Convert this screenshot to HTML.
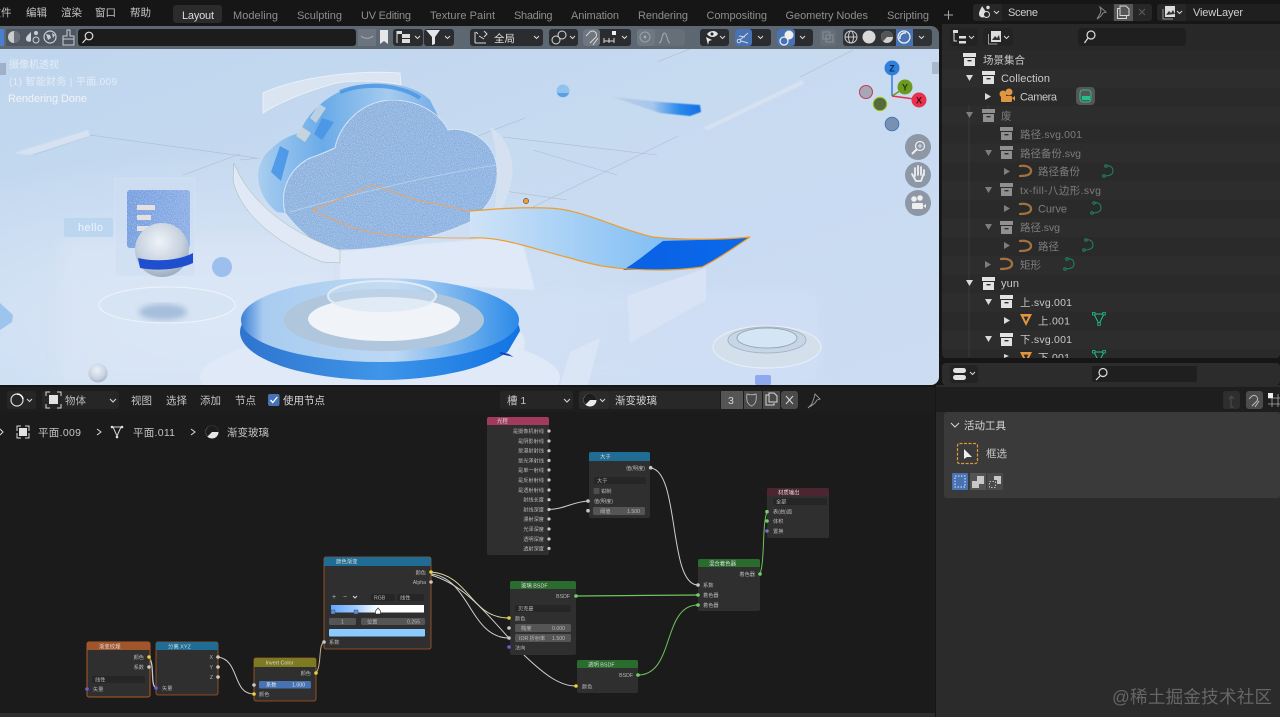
<!DOCTYPE html>
<html><head><meta charset="utf-8"><title>Blender</title>
<style>
html,body{margin:0;padding:0;background:#161616;width:1280px;height:717px;overflow:hidden}
svg{display:block;filter:blur(.35px)}
text{font-family:"Liberation Sans","Noto Sans CJK SC",sans-serif;fill:#c4c4c4;font-size:10.5px}
.tab{fill:#8e8e8e;font-size:11px}
.ol{fill:#c8c8c8;font-size:10.5px}
.dim{fill:#7d7d7d;font-size:10.5px}
.l{font-size:11px}
.n{font-size:5.2px;fill:#b8b8b8}
.nh{font-size:5.4px;fill:#d8d8d8}
.r{text-anchor:end}
.w{fill:none;stroke:#cfcfcf;stroke-width:1}
.g{fill:none;stroke:#6fc45c;stroke-width:1}
.ln{stroke:#aebccd;stroke-width:.6;fill:none}
.ic{fill:none;stroke:#d8d8d8;stroke-width:1}
</style></head><body>
<svg width="1280" height="717" viewBox="0 0 1280 717" xmlns="http://www.w3.org/2000/svg">
<defs>
<clipPath id="vclip"><path d="M0 49H939V377a8 8 0 0 1-8 8H0z"/></clipPath>
<linearGradient id="vp" x1="0" y1="0" x2="1" y2="1"><stop offset="0" stop-color="#bfd6ee"/><stop offset=".55" stop-color="#c8dbf1"/><stop offset="1" stop-color="#ccdcf3"/></linearGradient>
<radialGradient id="lite" cx=".25" cy=".8" r=".5"><stop offset="0" stop-color="#dde8f7"/><stop offset="1" stop-color="#dde8f7" stop-opacity="0"/></radialGradient>
<linearGradient id="cloudside" x1="0" y1="0" x2="1" y2="0"><stop offset="0" stop-color="#a9cdf0"/><stop offset=".35" stop-color="#6aabe8"/><stop offset=".7" stop-color="#a5cbef"/><stop offset="1" stop-color="#6ea8e6"/></linearGradient>
<linearGradient id="face" x1="0" y1="0" x2="1" y2="1"><stop offset="0" stop-color="#89b0dc"/><stop offset="1" stop-color="#88b0e2"/></linearGradient>
<linearGradient id="rib" x1="0" y1="0" x2="1" y2="0"><stop offset="0" stop-color="#d0e3f7"/><stop offset=".45" stop-color="#9ccbf5"/><stop offset="1" stop-color="#5cb0f2"/></linearGradient>
<linearGradient id="rib2" x1="0" y1="0" x2="1" y2="0"><stop offset="0" stop-color="#0a60e4"/><stop offset="1" stop-color="#0a6aea"/></linearGradient>
<linearGradient id="bar" x1="0" y1="0" x2="1" y2="0"><stop offset="0" stop-color="#bccee4"/><stop offset=".45" stop-color="#a6c6ec"/><stop offset=".75" stop-color="#2a8aeb"/><stop offset="1" stop-color="#1470e4"/></linearGradient>
<linearGradient id="disc" x1="0" y1="0" x2="1" y2="0"><stop offset="0" stop-color="#3b7fd6"/><stop offset=".08" stop-color="#a8ccf0"/><stop offset=".55" stop-color="#bdd8f4"/><stop offset=".85" stop-color="#5ea6ec"/><stop offset="1" stop-color="#2b8ae8"/></linearGradient>
<linearGradient id="discb" x1="0" y1="0" x2="1" y2="0"><stop offset="0" stop-color="#2f74cf"/><stop offset=".5" stop-color="#3f95e8"/><stop offset="1" stop-color="#1174e4"/></linearGradient>
<radialGradient id="ball" cx=".45" cy=".35" r=".7"><stop offset="0" stop-color="#eef3f9"/><stop offset=".6" stop-color="#c7d2de"/><stop offset="1" stop-color="#94a6ba"/></radialGradient>
<linearGradient id="ramp" x1="0" y1="0" x2="1" y2="0"><stop offset="0" stop-color="#63a6ff"/><stop offset=".25" stop-color="#9ac8ff"/><stop offset=".5" stop-color="#fff"/><stop offset="1" stop-color="#fff"/></linearGradient>
<linearGradient id="pan" x1="0" y1="0" x2="1" y2="0"><stop offset="0" stop-color="#6d9ade"/><stop offset="1" stop-color="#86abe6"/></linearGradient>
<filter id="noise" x="0" y="0" width="100%" height="100%"><feTurbulence type="fractalNoise" baseFrequency="1.1" numOctaves="2" seed="3"/><feColorMatrix values="0 0 0 0 .8  0 0 0 0 .88  0 0 0 0 .97  0 0 0 1.2 -.52"/><feComposite in2="SourceGraphic" operator="in"/><feMerge><feMergeNode in="SourceGraphic"/><feMergeNode/></feMerge></filter>
<filter id="b1"><feGaussianBlur stdDeviation=".6"/></filter>
<filter id="b3"><feGaussianBlur stdDeviation="3"/></filter>
<filter id="b8"><feGaussianBlur stdDeviation="8"/></filter>
<symbol id="coll" viewBox="0 0 14 14" overflow="visible"><rect x="0" y="0" width="13" height="4" fill="#e2e2e2"/><path d="M1 5h11v8H1zM4.5 7v1.4h4V7z" fill="#e2e2e2" fill-rule="evenodd"/></symbol>
<symbol id="curve" viewBox="0 0 14 12" overflow="visible"><path d="M1 1C7 0 12 2 12 6S7 11 1 11" fill="none" stroke="#c98a46" stroke-width="2.3" stroke-linecap="round"/></symbol>
<symbol id="gc" viewBox="0 0 14 14" overflow="visible"><path d="M5 2C9 1 12 3 12 7S8 12 3 12" fill="none" stroke="#1ca47c" stroke-width="1"/><circle cx="5" cy="2" r="1.3" fill="#2a2a2a" stroke="#1ca47c"/><circle cx="3" cy="12" r="1.3" fill="#2a2a2a" stroke="#1ca47c"/></symbol>
<symbol id="gm" viewBox="0 0 14 14" overflow="visible"><path d="M2 2h10L7 12z" fill="none" stroke="#1fc28e" stroke-width="1"/><rect x=".5" y=".5" width="2.5" height="2.5" fill="#2a2a2a" stroke="#1fc28e" stroke-width=".8"/><rect x="10.8" y=".5" width="2.5" height="2.5" fill="#2a2a2a" stroke="#1fc28e" stroke-width=".8"/><rect x="5.8" y="10.8" width="2.5" height="2.5" fill="#2a2a2a" stroke="#1fc28e" stroke-width=".8"/></symbol>
<symbol id="mesh" viewBox="0 0 14 14" overflow="visible"><path d="M1 1h12L7 13z M4.6 3.6h4.8L7 8.6z" fill="#df963f" fill-rule="evenodd"/></symbol>
</defs>

<rect width="1280" height="717" fill="#161616"/>

<!-- top bar -->
<rect x="173" y="5" width="49" height="18" rx="3" fill="#2b2b2b"/>
<text x="-9.5" y="16">文件</text><text x="26" y="16">编辑</text><text x="61" y="16">渲染</text><text x="95" y="16">窗口</text><text x="130" y="16">帮助</text>
<text class="l" x="182" y="19" textLength="32" style="fill:#dcdcdc">Layout</text>
<text class="tab" x="233" y="19" textLength="45">Modeling</text>
<text class="tab" x="297" y="19" textLength="45">Sculpting</text>
<text class="tab" x="361" y="19" textLength="50">UV Editing</text>
<text class="tab" x="430" y="19" textLength="65">Texture Paint</text>
<text class="tab" x="514" y="19" textLength="38.5">Shading</text>
<text class="tab" x="571" y="19" textLength="48">Animation</text>
<text class="tab" x="638" y="19" textLength="50">Rendering</text>
<text class="tab" x="706.5" y="19" textLength="60.5">Compositing</text>
<text class="tab" x="785.5" y="19" textLength="82.5">Geometry Nodes</text>
<text class="tab" x="887" y="19" textLength="42">Scripting</text>
<path d="M944 15h9M948.500 10.500v9" stroke="#a8a8a8" fill="none"/>

<!-- scene selector -->
<rect x="973" y="4" width="179" height="17" rx="3" fill="#272727"/>
<rect x="1002" y="4" width="111" height="17" fill="#1f1f1f"/>
<path d="M982 6c2 3 4 5 4 8a3.500 3.500 0 0 1-7 0c0-3 2-5 3-8z" fill="#dedede"/><circle cx="986.500" cy="14.500" r="3" fill="#272727" stroke="#dedede"/><circle cx="988" cy="7.500" r="1.700" fill="#dedede"/>
<path d="M994 11l2.500 2.500L999 11" class="ic"/>
<text class="l" x="1008" y="16" style="fill:#cfcfcf" textLength="30">Scene</text>
<path d="M1100 7l6 5-3 1-2 3-4 3 3-5 1-3z" class="ic" stroke-width=".8" style="stroke:#8a8a8a"/>
<rect x="1114" y="4" width="19" height="17" fill="#565656"/>
<path d="M1120 8.500h-2.500v10h9v-3M1120 6h6l3 3v6.500h-9z" class="ic" />
<path d="M1139 9l6 6M1145 9l-6 6" stroke="#5e5e5e" fill="none"/>
<rect x="1157" y="4" width="123" height="17" rx="3" fill="#272727"/>
<rect x="1186" y="4" width="94" height="17" fill="#1f1f1f"/>
<rect x="1165" y="6" width="10" height="11" fill="#dcdcdc"/><path d="M1166 15l3-4 2 2 2-3 2 4z" fill="#333"/><path d="M1163 9v10h10" class="ic" style="stroke:#999"/>
<path d="M1177 11l2.500 2.500L1182 11" class="ic"/>
<text class="l" x="1193" y="16" style="fill:#cfcfcf" textLength="50">ViewLayer</text>

<!-- viewport -->
<g clip-path="url(#vclip)">
<path d="M0 49H939V385H0z" fill="url(#vp)"/>
<path d="M0 49H939V385H0z" fill="url(#lite)"/>
<rect x="60" y="240" width="270" height="145" fill="#dbe6f6" filter="url(#b8)" opacity=".6"/>
<rect x="520" y="290" width="300" height="95" fill="#d3e0f5" filter="url(#b8)" opacity=".6"/>
<!-- floor lines -->
<path class="ln" d="M90 135L257 158M33 155L93 135M183 175L240 154M473 138L525 118M503 137L657 155M533 207L678 136M497 190L567 200M533 150L617 175M800 77L853 50M657 62L690 49M240 160L260 158"/>
<path d="M14 153L88 130L90 136L30 155z" fill="#d6e2f2" filter="url(#b1)"/>
<path d="M703 128L802 80L804 84L708 130z" fill="#d6e2f2" filter="url(#b1)"/>

<!-- top arc -->
<path d="M263 93C300 76 360 70 400 73L401 85C380 80 345 80 333 84C305 92 280 102 263 113z" fill="#dbe5f2" stroke="#eef3f9" stroke-width=".8"/>
<!-- cloud side -->
<path d="M277 212C255 195 252 165 270 150C280 140 290 135 300 133C305 115 330 90 360 85C385 80 415 85 430 100L445 130L300 215z" fill="url(#cloudside)"/>
<path d="M319 104l-9 14 6 5 10-15z" fill="#c4d4e2" opacity=".9"/>
<path d="M302 127l-6 9 9 6 6-9z" fill="#c6d4de"/>
<path d="M271 172l9-26 9 5-8 30z" fill="#3a8de4" opacity=".75"/>
<path d="M322 118l-8 16 8 6 12-18z" fill="#3f8fe6" opacity=".7"/>
<path d="M340 92C360 84 395 82 420 98" fill="none" stroke="#3c8fe4" stroke-width="4" opacity=".7"/>
<!-- cloud face -->
<path d="M285 213C279 190 290 168 310 158C322 154 330 150 335 148C340 122 365 100 392 100C420 100 441 115 448 130C470 126 495 142 497 168C499 190 488 208 470 222C440 236 390 250 342 250C320 250 300 232 285 213z" fill="url(#face)" stroke="#d3e2f3" stroke-width="1" filter="url(#noise)"/>
<path d="M290 212C350 195 430 175 497 165" fill="none" stroke="#c6daf0" stroke-width=".8" opacity=".8"/>
<!-- ground under cloud -->
<path d="M340 251L470 240L520 232L535 290L340 280z" fill="#dfe9f7" filter="url(#b1)"/>
<!-- lower left arc -->
<path d="M234 163C250 205 295 235 340 250L340 263L322 262C280 245 240 215 233 180z" fill="#e0e9f5" stroke="#a8b4a8" stroke-width=".5"/>
<!-- right arc -->
<path d="M490 127C505 135 515 155 512 178C508 200 500 215 492 226C498 195 500 155 490 127z" fill="#d6e2f0" opacity=".95"/>

<!-- ribbon -->
<path d="M470 237C500 236 530 248 570 258C590 264 610 270 660 270C680 270 695 268 702 267C720 258 735 247 750 237C720 240 680 240 653 237C620 230 580 208 547 208C520 207 495 209 470 211z" fill="url(#rib)"/>
<path d="M623 270C640 260 650 250 663 241C690 240 720 240 750 237C735 247 720 258 702 267C680 270 650 270 623 270z" fill="url(#rib2)"/>
<path d="M312 210L373 185L417 200L470 211" fill="none" stroke="#e9a56a" stroke-width="1"/>
<path d="M312 210L350 227C375 235 400 238 470 238" fill="none" stroke="#e9a56a" stroke-width="1"/>
<path d="M470 211C495 209 520 207 547 208C580 208 620 230 653 237C680 240 720 240 750 237C735 247 720 258 702 267C695 268 680 270 660 270C610 270 590 264 570 258C530 248 500 236 470 238" fill="none" stroke="#ee9d2e" stroke-width="1.2"/>
<circle cx="526" cy="201" r="2.700" fill="#f29a35" stroke="#333" stroke-width=".5"/>
<!-- white box -->
<path d="M627 296L706 268V300L630 343z" fill="#d8e3f6"/>
<!-- bar and droplet -->
<path d="M613 97L660 102L700 105L701 112L690 116L660 113z" fill="url(#bar)" filter="url(#b1)"/>
<circle cx="563" cy="91" r="6.500" fill="#8fc2ee"/><path d="M557 93a6.500 6.500 0 0 0 12 0z" fill="#5aa0e0"/>

<!-- hello card -->
<rect x="115" y="178" width="80" height="98" fill="#cfdef2" stroke="#dde7f5" stroke-width=".7" opacity=".6"/>
<rect x="64" y="218" width="49" height="19" rx="2" fill="#bcd6f0"/>
<text x="78" y="231" style="fill:#eef5fc;font-size:11px" textLength="25">hello</text>
<rect x="127" y="190" width="63" height="58" rx="3" fill="url(#pan)" filter="url(#noise)"/>
<rect x="137" y="205" width="18" height="5" fill="#e3dfe2"/><rect x="137" y="215" width="14" height="5" fill="#e3dfe2"/><rect x="137" y="226" width="12" height="5" fill="#e3dfe2"/>
<ellipse cx="167" cy="305" rx="68" ry="18" fill="#d6e4f3" stroke="#eef3f9"/>
<ellipse cx="163" cy="312" rx="24" ry="8" fill="#a5bedc" filter="url(#b3)"/>
<circle cx="162" cy="250" r="27" fill="url(#ball)"/>
<path d="M138 258C155 262 178 261 193 253V263C178 270 155 271 140 268z" fill="#1f4ecf"/>
<circle cx="222" cy="267" r="10" fill="#9cbfee"/>
<path d="M0 303L13 315L12 322L0 330z" fill="#9cc4ec"/>
<circle cx="98" cy="373" r="9.500" fill="url(#ball)" opacity=".85"/>

<!-- platform -->
<ellipse cx="380" cy="378" rx="180" ry="46" fill="#e0e9f7"/>
<ellipse cx="380" cy="332" rx="140" ry="48" fill="url(#discb)"/>
<ellipse cx="380" cy="320" rx="139" ry="42" fill="url(#disc)"/>
<ellipse cx="384" cy="320" rx="100" ry="31" fill="#afc6dc"/>
<ellipse cx="384" cy="319" rx="76" ry="22" fill="#f0f4f9"/>
<ellipse cx="382" cy="296" rx="54" ry="15" fill="#cfe0f1" fill-opacity=".45" stroke="#e2eaf4" stroke-width="2"/>
<path d="M500 353l14 3 5-3" stroke="#1545b8" stroke-width="2" fill="none"/>
<path d="M520 331c8 8 5 22-3 28l-10-6z" fill="#e0e9f6"/>
<path d="M560 385l10-33 30-14 -12 47z" fill="#dce6f5" opacity=".8"/>
<!-- ring -->
<ellipse cx="767" cy="347" rx="54" ry="21" fill="#d4dfec" stroke="#e8eff7"/>
<ellipse cx="767" cy="340" rx="39" ry="13" fill="#c6d6e6" stroke="#a7b5c3"/>
<ellipse cx="767" cy="338" rx="30" ry="10" fill="#d4e5f4" stroke="#8e9cab" stroke-width=".8"/>
<rect x="755" y="375" width="16" height="10" rx="2" fill="#8ea9ee"/>

<!-- viewport overlays -->
<text x="9" y="68" style="fill:#e4ecf6;font-size:10px">摄像机透视</text>
<text x="9" y="85" style="fill:#e4ecf6;font-size:10px" textLength="108">(1) 智能财务 | 平面.009</text>
<text x="8" y="102" style="fill:#eef3fa;font-size:11px" textLength="79">Rendering Done</text>
<rect x="0" y="63" width="6" height="12" fill="#9fb1c8"/>
<rect x="932" y="62" width="7" height="12" rx="1" fill="#a9b8ca"/>
</g>

<!-- gizmo -->
<path d="M892 96V72" stroke="#2f7fdc" stroke-width="1.500"/><path d="M892 96L903 89" stroke="#6b9a1e" stroke-width="1.500"/><path d="M892 96L914 99" stroke="#e9304c" stroke-width="1.500"/>
<circle cx="866" cy="92" r="6.500" fill="#a6a8b8" stroke="#c43a52"/>
<circle cx="880" cy="104" r="6.800" fill="#546c3c" stroke="#a8d020"/>
<circle cx="892" cy="124" r="6.800" fill="#7a90b0" stroke="#3f76c0"/>
<circle cx="892" cy="68" r="7.500" fill="#2f7fdc"/>
<circle cx="905" cy="87" r="7.500" fill="#6b9a1e"/>
<circle cx="919" cy="100" r="7.500" fill="#e9304c"/>
<text x="892" y="71.500" text-anchor="middle" style="fill:#102a48;font-size:9px;font-weight:bold">Z</text>
<text x="905" y="90.500" text-anchor="middle" style="fill:#2a3a0a;font-size:9px;font-weight:bold">Y</text>
<text x="919" y="103.500" text-anchor="middle" style="fill:#4a0a14;font-size:9px;font-weight:bold">X</text>
<circle cx="918" cy="147" r="13" fill="#8d97a6"/>
<circle cx="920" cy="146" r="4.500" fill="none" stroke="#eee" stroke-width="1.200"/><path d="M917 149l-5 5" stroke="#eee" stroke-width="2"/><path d="M918 146h4M920 144v4" stroke="#eee" stroke-width=".8"/>
<circle cx="918" cy="175" r="13" fill="#8d97a6"/>
<path d="M912 174l4 7h5l3-8M915 176v-8M918 175v-9M921 175v-8M924 175v-5" stroke="#eee" stroke-width="1.800" fill="none" stroke-linecap="round"/>
<circle cx="918" cy="203" r="13" fill="#8d97a6"/>
<circle cx="914" cy="199" r="2.800" fill="#eee"/><circle cx="920" cy="198" r="2.800" fill="#eee"/><rect x="912" y="203" width="11" height="6" rx="1" fill="#eee"/><path d="M923 206l3-2v4z" fill="#eee"/>

<!-- viewport header -->
<path d="M0 26H931a8 8 0 0 1 8 8V49H0z" fill="#5d6772"/>
<rect x="0" y="29" width="4" height="17" fill="#4a7fd0"/>
<rect x="6" y="29" width="70" height="17" fill="#4d5660"/>
<circle cx="14" cy="37" r="6" fill="#c9cdd2"/><path d="M14 31a6 6 0 0 1 0 12z" fill="#6a7078"/>
<path d="M28 35c2-2 3-3 3-3v9a3 3 0 0 1-5-2c0-2 1-3 2-4z" fill="#d0d4d8"/><circle cx="36" cy="33" r="2" fill="#c9cdd2"/><circle cx="36" cy="40" r="3" fill="none" stroke="#c9cdd2"/>
<circle cx="50" cy="37" r="6" fill="none" stroke="#c9cdd2" stroke-width="1.200"/><path d="M46 34l4 1 1 3-3 2zM52 33l3 2-2 3z" fill="#c9cdd2"/>
<path d="M67 30h3v6h4v3h-11v-3h4zM63 39h11v6h-11z" fill="none" stroke="#c9cdd2"/>
<rect x="78" y="29" width="278" height="17" rx="3" fill="#1c1c1c"/>
<circle cx="89" cy="36" r="3.800" fill="none" stroke="#ddd" stroke-width="1.200"/><path d="M86 39l-3.500 4" stroke="#ddd" stroke-width="1.200"/>
<rect x="358" y="29" width="18" height="17" fill="#6c7480"/><path d="M361 36c3 3 9 3 12 0" class="ic" style="stroke:#aaa"/>
<path d="M380 30h8v14l-4-3-4 3z" fill="#e6e6e6"/>
<rect x="393" y="29" width="30" height="17" rx="3" fill="#2a2c2f"/>
<path d="M397 31v12" stroke="#ddd"/><rect x="397" y="31" width="5" height="3" fill="#ddd"/><rect x="402" y="34" width="8" height="4" fill="#ddd"/><rect x="402" y="39" width="8" height="4" fill="#ddd"/>
<path d="M415 36l2.500 2.500L420 36" class="ic"/>
<rect x="424" y="29" width="30" height="17" rx="3" fill="#2a2c2f"/>
<path d="M426 30h14l-5 7v7l-3 1v-8z" fill="#e6e6e6"/>
<path d="M445 36l2.500 2.500L450 36" class="ic"/>
<rect x="470" y="29" width="73" height="17" rx="3" fill="#2a2c2f"/>
<path d="M475 32v11M475 43h11M479 36l5 3M476 32l2 2" class="ic" stroke-width=".9"/><path d="M484 31l3 3-3 3" class="ic" stroke-width=".9"/>
<text x="494" y="42" style="fill:#dcdcdc;font-size:10.500px">全局</text>
<path d="M534 36l2.500 2.500L539 36" class="ic"/>
<rect x="549" y="29" width="29" height="17" rx="3" fill="#2a2c2f"/>
<circle cx="556" cy="40" r="4" class="ic"/><circle cx="562" cy="35" r="4" class="ic"/>
<path d="M570 36l2.500 2.500L575 36" class="ic"/>
<rect x="583" y="29" width="48" height="17" rx="3" fill="#2a2c2f"/><rect x="583" y="29" width="17" height="17" rx="3" fill="#6e7680"/>
<path d="M590 43l6-6a4 4 0 0 0-7-4l-3 3M593 45l5-7" class="ic" stroke="#ccc"/>
<path d="M604 38v5M614 38v5M609 38v5M604 41h10" class="ic" stroke-width=".8"/><rect x="612" y="31" width="4" height="4" fill="#eee"/>
<path d="M622 36l2.500 2.500L627 36" class="ic"/>
<rect x="637" y="29" width="48" height="17" rx="3" fill="#666e78"/><rect x="637" y="29" width="18" height="17" rx="3" fill="#6f7781"/>
<circle cx="645" cy="37" r="5" fill="none" stroke="#98a0a8"/><circle cx="645" cy="37" r="1.300" fill="#a8b0b8"/>
<path d="M659 43c3 0 3-10 5.500-10s3 10 5.500 10" fill="none" stroke="#a3abb3"/>
<rect x="700" y="29" width="29" height="17" rx="3" fill="#2a2c2f"/>
<path d="M707 34c3-4 9-4 11 0-3 4-8 4-11 0z" fill="#e6e6e6"/><circle cx="712" cy="34" r="1.500" fill="#222"/><path d="M706 37l6 3-3 1-1 4z" fill="#e6e6e6"/>
<path d="M720 36l2.500 2.500L725 36" class="ic"/>
<rect x="735" y="29" width="36" height="17" rx="3" fill="#2a2c2f"/><rect x="735" y="29" width="17" height="17" rx="3" fill="#4772b3"/>
<circle cx="739" cy="41" r="1.800" class="ic"/><path d="M740 40l8-7M741 41l7 2M739 36l6 1" class="ic"/>
<path d="M758 36l2.500 2.500L763 36" class="ic"/>
<rect x="777" y="29" width="36" height="17" rx="3" fill="#2a2c2f"/><rect x="777" y="29" width="18" height="17" rx="3" fill="#4772b3"/>
<circle cx="789" cy="35" r="4.500" fill="#eee"/><circle cx="784" cy="41" r="4" fill="none" stroke="#eee" stroke-width="1.300"/>
<path d="M800 36l2.500 2.500L805 36" class="ic"/>
<rect x="820" y="29" width="16" height="17" rx="3" fill="#656d77"/><rect x="823" y="32" width="7" height="7" fill="none" stroke="#868e96"/><rect x="826" y="35" width="7" height="7" fill="none" stroke="#868e96"/>
<rect x="843" y="29" width="89" height="17" rx="3" fill="#2f3235"/><rect x="896" y="29" width="17" height="17" fill="#4772b3"/>
<circle cx="851" cy="37" r="6" fill="none" stroke="#ccc"/><ellipse cx="851" cy="37" rx="2.500" ry="6" fill="none" stroke="#ccc"/><path d="M845 37h12" stroke="#ccc"/>
<circle cx="869" cy="37" r="6.500" fill="#d8d8d8"/>
<circle cx="887" cy="37" r="6" fill="#d0d0d0"/><path d="M887 31a6 6 0 0 1 6 6h-6l-4 4.400A6 6 0 0 1 887 31z" fill="#555"/>
<circle cx="904" cy="37" r="6" fill="none" stroke="#eee" stroke-width="1.300"/><path d="M900 39a5 5 0 0 1 6-6" fill="none" stroke="#eee" stroke-width="1.500"/>
<path d="M919 36l2.500 2.500L924 36" class="ic"/>

<!-- outliner -->
<rect x="942" y="24" width="338" height="334" rx="4" fill="#2a2a2a"/>
<rect x="942" y="24" width="338" height="26" fill="#282828"/>
<rect x="950" y="28" width="28" height="18" rx="4" fill="#232323"/>
<path d="M954 32v9h3" class="ic"/><rect x="953" y="30" width="5" height="3" fill="#ddd"/><rect x="959" y="36" width="7" height="2.500" fill="#ddd"/><rect x="959" y="41" width="7" height="2.500" fill="#ddd"/>
<path d="M969 36l2.500 2.500L974 36" class="ic"/>
<rect x="983" y="28" width="30" height="18" rx="4" fill="#232323"/>
<rect x="991" y="31" width="10" height="11" fill="#dcdcdc"/><path d="M992 40l3-4 2 2 2-3 1 5z" fill="#333"/><path d="M988.500 34v10h9" class="ic" style="stroke:#999"/>
<path d="M1004 36l2.500 2.500L1009 36" class="ic"/>
<rect x="1078" y="28" width="108" height="18" rx="4" fill="#1f1f1f"/>
<circle cx="1091" cy="35" r="4" fill="none" stroke="#ddd" stroke-width="1.200"/><path d="M1088 38l-3.500 5" stroke="#ddd" stroke-width="1.200"/>
<rect x="942" y="69" width="338" height="18.700" fill="#2d2d2d"/><rect x="942" y="106" width="338" height="18.700" fill="#2d2d2d"/><rect x="942" y="143.500" width="338" height="18.700" fill="#2d2d2d"/><rect x="942" y="181" width="338" height="18.700" fill="#2d2d2d"/><rect x="942" y="218.500" width="338" height="18.700" fill="#2d2d2d"/><rect x="942" y="256" width="338" height="18.700" fill="#2d2d2d"/><rect x="942" y="293" width="338" height="18.700" fill="#2d2d2d"/><rect x="942" y="330.500" width="338" height="18.700" fill="#2d2d2d"/>
<path d="M969 105v252M988 105v5" stroke="#3b3b3b" fill="none"/>
<g fill="#dadada"><path d="M966 75h7l-3.500 6z"/><path d="M985 93v7l6-3.500z"/><path d="M966 280h7l-3.500 6zM985 299h7l-3.500 6zM985 336h7l-3.500 6zM1004 317v7l6-3.500zM1004 354v4l5-2z"/></g>
<g fill="#7e7e7e"><path d="M966 112h7l-3.500 6zM985 150h7l-3.500 6zM985 187h7l-3.500 6zM985 224h7l-3.500 6zM985 261v7l6-3.500zM1004 168v7l6-3.500zM1004 205v7l6-3.500zM1004 242v7l6-3.500z"/></g>
<use href="#coll" x="963" y="53" width="14" height="14"/>
<use href="#coll" x="982" y="71" width="14" height="14"/>
<g opacity=".55"><use href="#coll" x="982" y="109" width="14" height="14"/><use href="#coll" x="1000" y="127" width="14" height="14"/><use href="#coll" x="1000" y="146" width="14" height="14"/><use href="#coll" x="1000" y="183" width="14" height="14"/><use href="#coll" x="1000" y="221" width="14" height="14"/></g>
<use href="#coll" x="982" y="277" width="14" height="14"/><use href="#coll" x="1000" y="295" width="14" height="14"/><use href="#coll" x="1000" y="333" width="14" height="14"/>
<circle cx="1003" cy="94" r="3.500" fill="#df963f"/><circle cx="1009" cy="92" r="3.500" fill="#df963f"/><rect x="1001" y="96" width="11" height="6" rx="1" fill="#df963f"/><path d="M1012 98l3-2v5z" fill="#df963f"/>
<g opacity=".75"><use href="#curve" x="1019" y="165" width="14" height="12"/><use href="#curve" x="1019" y="203" width="14" height="12"/><use href="#curve" x="1019" y="240" width="14" height="12"/><use href="#curve" x="1000" y="258" width="14" height="12"/></g>
<use href="#mesh" x="1019" y="313" width="14" height="14"/><use href="#mesh" x="1019" y="351" width="14" height="14"/>
<g opacity=".75"><use href="#gc" x="1101" y="164" width="14" height="14"/><use href="#gc" x="1089" y="201" width="14" height="14"/><use href="#gc" x="1081" y="238" width="14" height="14"/><use href="#gc" x="1062" y="257" width="14" height="14"/></g>
<use href="#gm" x="1092" y="312" width="14" height="14"/><use href="#gm" x="1092" y="350" width="14" height="14"/>
<rect x="1076" y="87" width="19" height="18" rx="4" fill="#565656"/>
<rect x="1080" y="90" width="11" height="12" rx="3" fill="none" stroke="#1fc28e"/><rect x="1082" y="96" width="8" height="4" fill="#1fc28e"/>
<text class="ol" x="983" y="63.500">场景集合</text>
<text class="ol l" x="1001" y="82" textLength="49">Collection</text>
<text class="ol l" x="1020" y="100.500" textLength="37">Camera</text>
<text class="dim" x="1001" y="119.500">废</text>
<text class="dim" x="1020" y="138" textLength="62">路径.svg.001</text>
<text class="dim" x="1020" y="157" textLength="61">路径备份.svg</text>
<text class="dim" x="1038" y="175">路径备份</text>
<text class="dim" x="1020" y="194" textLength="81">tx-fill-八边形.svg</text>
<text class="dim l" x="1038" y="212.500" textLength="29">Curve</text>
<text class="dim" x="1020" y="231" textLength="40">路径.svg</text>
<text class="dim" x="1038" y="250">路径</text>
<text class="dim" x="1020" y="268.500">矩形</text>
<text class="ol l" x="1001" y="287" textLength="18">yun</text>
<text class="ol" x="1020" y="306" textLength="52">上.svg.001</text>
<text class="ol" x="1038" y="324.500" textLength="32">上.001</text>
<text class="ol" x="1020" y="343" textLength="52">下.svg.001</text>
<text class="ol" x="1038" y="361" textLength="32">下.001</text>
<rect x="940" y="358" width="340" height="6" fill="#161616"/>
<rect x="942" y="363" width="338" height="22" rx="4" fill="#2c2c2c"/>
<rect x="950" y="365" width="28" height="18" rx="3" fill="#232323"/>
<rect x="953" y="368" width="13" height="5" rx="2.500" fill="#e2e2e2"/><rect x="953" y="375" width="13" height="5" rx="2.500" fill="#e2e2e2"/>
<path d="M970 372l2.500 2.500L975 372" class="ic"/>
<rect x="1092" y="366" width="105" height="16" rx="2" fill="#1f1f1f"/>
<circle cx="1103" cy="372.500" r="4" fill="none" stroke="#ddd" stroke-width="1.200"/><path d="M1100 376l-4 4" stroke="#ddd" stroke-width="1.200"/>

<!-- properties lower -->
<rect x="936" y="385" width="344" height="332" fill="#2b2b2b"/>
<rect x="936" y="387" width="344" height="25" fill="#1e1e1e"/>
<rect x="1223" y="391" width="17" height="18" rx="3" fill="#2e2e2e"/><path d="M1231 397v10h3M1229 399l2.500-3 2.500 3" fill="none" stroke="#4f4f4f"/>
<rect x="1246" y="391" width="17" height="18" rx="3" fill="#4c4c4c"/><path d="M1252 406l5-5a3.500 3.500 0 0 0-6-4l-2 2M1255 407l4-6" fill="none" stroke="#bbb"/>
<path d="M1268 398h12M1268 404h12M1272 394v13M1278 394v13" stroke="#aaa" fill="none" stroke-width=".8"/><rect x="1268" y="393" width="5" height="5" fill="#eee"/>
<rect x="944" y="412" width="336" height="86" rx="3" fill="#3a3a3a"/>
<path d="M951 423l4 4 4-4" class="ic" stroke="#bbb"/>
<text x="964" y="429" style="fill:#d4d4d4;font-size:10.500px">活动工具</text>
<rect x="957.500" y="443.500" width="20" height="20" rx="2" fill="none" stroke="#dd9a35" stroke-width="1.200" stroke-dasharray="3 1.500"/>
<path d="M964 449v10l3-2h5z" fill="#eee"/>
<text x="986" y="457" style="fill:#c8c8c8;font-size:10.500px">框选</text>
<rect x="952" y="473" width="16" height="17" rx="1" fill="#4772b3"/><rect x="955" y="476" width="10" height="11" fill="none" stroke="#e6eefa" stroke-dasharray="1.500 1.500"/>
<rect x="970" y="473" width="16" height="17" fill="#545454"/><path d="M972 488v-7h5v-5h7v8h-5v4z" fill="#c8c8c8"/>
<rect x="987" y="473" width="16" height="17" fill="#4a4a4a"/><path d="M994 476h7v8h-4v-4h-3z" fill="#c8c8c8"/><rect x="989.500" y="481.500" width="6" height="6" fill="none" stroke="#bbb" stroke-dasharray="1.500 1.500"/>

<!-- node editor -->
<rect x="0" y="387" width="935" height="330" fill="#1b1b1b"/>
<rect x="0" y="387" width="935" height="25" fill="#1d1d1d"/>
<rect x="7" y="391" width="29" height="18" rx="3" fill="#262626"/>
<circle cx="17" cy="400" r="6" fill="none" stroke="#ddd" stroke-width="1.200"/><path d="M17 394a6 6 0 0 1 6 5" fill="none" stroke="#fff" stroke-width="1.500"/>
<path d="M27 399l2.500 2.500L32 399" class="ic"/>
<rect x="42" y="391" width="77" height="18" rx="3" fill="#262626"/>
<rect x="49" y="395" width="9" height="9" fill="#e2e2e2"/><path d="M46 396v-4h4M61 396v-4h-4M46 404v4h4M61 404v4h-4" class="ic" stroke="#999" stroke-width=".8"/>
<text x="65" y="404" style="fill:#b8b8b8;font-size:10.500px">物体</text>
<path d="M110 399l3 3 3-3" class="ic"/>
<text x="131" y="404">视图</text><text x="166" y="404">选择</text><text x="200" y="404">添加</text><text x="235" y="404">节点</text>
<rect x="268" y="394" width="11.500" height="12" rx="2" fill="#4772b3"/><path d="M270.500 400l2.300 2.500 4.500-5.500" fill="none" stroke="#fff" stroke-width="1.300"/>
<text x="283" y="404" style="fill:#d6d6d6">使用节点</text>
<path d="M0 429l3 3-3 3M97 429l4 3-4 3M191 429l4 3-4 3" class="ic" stroke="#aaa"/>
<rect x="19" y="428" width="8" height="8" fill="#e2e2e2"/><path d="M17 431v-5h4M29 431v-5h-4M17 433v5h4M29 433v5h-4" class="ic" stroke="#888" stroke-width=".8"/>
<text x="38" y="436" textLength="43">平面.009</text>
<path d="M113 427h8l-4 9zM111.500 427h11" fill="none" stroke="#d8d8d8"/><circle cx="112" cy="427" r="1.300" fill="#ddd"/><circle cx="122" cy="427" r="1.300" fill="#ddd"/><circle cx="117" cy="437" r="1.300" fill="#ddd"/>
<text x="133" y="436" textLength="42">平面.011</text>
<circle cx="212" cy="432" r="6.500" fill="#e6e6e6"/><path d="M212 425.500a6.500 6.500 0 0 1 6.500 6.500H212l-4.500 4.500a6.500 6.500 0 0 1 4.500-11z" fill="#1d1d1d"/>
<text x="227" y="436">渐变玻璃</text>
<rect x="500" y="391" width="73" height="18" rx="3" fill="#262626"/>
<text x="507" y="404" style="fill:#c4c4c4;font-size:10.500px">槽 1</text>
<path d="M564 399l3 3 3-3" class="ic"/>
<rect x="579" y="391" width="30" height="18" rx="3" fill="#2b2b2b"/>
<circle cx="590" cy="400" r="6.500" fill="#eaeaea"/><path d="M590 393.500a6.500 6.500 0 0 1 6.500 6.500H590l-4.500 4.500a6.500 6.500 0 0 1 4.500-11z" fill="#1d1d1d"/>
<path d="M600 399l2.500 2.500L605 399" class="ic"/>
<rect x="609" y="391" width="111" height="18" fill="#282828"/>
<text x="615" y="404" style="fill:#d2d2d2;font-size:10.500px">渐变玻璃</text>
<rect x="721" y="391" width="22" height="18" fill="#555"/><text x="728" y="404" style="fill:#d8d8d8;font-size:10.500px">3</text>
<rect x="744" y="391" width="18" height="18" fill="#4a4a4a"/><path d="M747 394c3 1 6 1 9 0 1 6 0 10-4.500 12-4.500-2-5.500-6-4.500-12z" fill="none" stroke="#aaa"/>
<rect x="763" y="391" width="17" height="18" fill="#4a4a4a"/><path d="M769 395h-3v10h8v-2M769 393h5l3 3v6h-8z" class="ic"/>
<rect x="781" y="391" width="17" height="18" rx="3" fill="#4a4a4a"/><path d="M786 396l7 8M793 396l-7 8" class="ic"/>
<path d="M815 394l5 5-3 1-2 3-4 3 2-5 1-3z" fill="none" stroke="#9a9a9a" stroke-width=".9"/><path d="M808 408l4-4" stroke="#9a9a9a"/>

<!-- wires -->
<path class="w" d="M549 509.500C565 509 572 502 588 501"/>
<path class="w" d="M651 468C680 472 668 585 698 585"/>
<path class="w" d="M149 657C155 665 150 685 156 688" style="stroke:#bfcad6;stroke-width:1.300"/>
<path class="w" d="M218 657C240 660 232 694 254 694"/>
<path class="w" d="M316 673C322 665 318 645 324 642" style="stroke:#c0b48a"/>
<path class="w" d="M431 572C470 575 470 618 509 618" style="stroke:#ded9a0"/>
<path class="w" d="M431 574C470 578 470 638 509 638"/>
<path class="w" d="M431 575C465 585 485 612 525 656C545 675 560 686 576 686"/>
<path class="g" d="M576 596L698 595" style="stroke-width:1.300"/>
<path class="g" d="M638 675C675 675 662 605 698 605"/>
<path class="g" d="M760 574C765 560 762 525 767 511.700"/>

<!-- node 光程 -->
<rect x="487" y="417" width="62" height="138" rx="2" fill="#2f2f2f"/>
<path d="M487 425v-6a2 2 0 0 1 2-2h58a2 2 0 0 1 2 2v6z" fill="#a13a5c"/>
<text class="nh" x="497" y="423">光程</text>
<text class="n r" x="544" y="433">是摄像机射线</text><text class="n r" x="544" y="443">是阴影射线</text><text class="n r" x="544" y="452.500">是漫射射线</text><text class="n r" x="544" y="462.500">是光泽射线</text><text class="n r" x="544" y="472">是单一射线</text><text class="n r" x="544" y="482">是反射射线</text><text class="n r" x="544" y="492">是透射射线</text><text class="n r" x="544" y="501.500">射线长度</text><text class="n r" x="544" y="511.500">射线深度</text><text class="n r" x="544" y="521">漫射深度</text><text class="n r" x="544" y="531">光泽深度</text><text class="n r" x="544" y="541">透明深度</text><text class="n r" x="544" y="550.500">透射深度</text>
<g fill="#c8c8c8"><circle cx="549" cy="431" r="1.600"/><circle cx="549" cy="441" r="1.600"/><circle cx="549" cy="450.700" r="1.600"/><circle cx="549" cy="460.500" r="1.600"/><circle cx="549" cy="470" r="1.600"/><circle cx="549" cy="480" r="1.600"/><circle cx="549" cy="490" r="1.600"/><circle cx="549" cy="499.700" r="1.600"/><circle cx="549" cy="509.500" r="1.600"/><circle cx="549" cy="519" r="1.600"/><circle cx="549" cy="529" r="1.600"/><circle cx="549" cy="539" r="1.600"/><circle cx="549" cy="548.500" r="1.600"/></g>

<!-- node 大于 -->
<rect x="589" y="452" width="61" height="66" rx="2" fill="#2f2f2f"/>
<path d="M589 461v-7a2 2 0 0 1 2-2h57a2 2 0 0 1 2 2v7z" fill="#1f6d94"/>
<text class="nh" x="600" y="458.500">大于</text>
<text class="n r" x="645" y="470">值(明度)</text>
<rect x="594" y="477" width="52" height="7" rx="1.500" fill="#262626"/><text class="n" x="597" y="482.500">大于</text>
<rect x="593.500" y="488" width="6" height="6" rx="1" fill="#4e4e4e"/><text class="n" x="601" y="493">钳制</text>
<text class="n" x="594" y="503">值(明度)</text>
<rect x="593" y="507" width="52" height="8" rx="1.500" fill="#555"/><text class="n" x="600" y="513">阈值</text><text class="n r" x="640" y="513">1.500</text>
<circle cx="650.700" cy="467.700" r="1.800" fill="#c8c8c8"/><circle cx="588" cy="501" r="1.800" fill="#c8c8c8"/><circle cx="588" cy="510.700" r="1.800" fill="#c8c8c8"/>

<!-- node 材质输出 -->
<rect x="767" y="488" width="62" height="50" rx="2" fill="#2f2f2f"/>
<path d="M767 496v-6a2 2 0 0 1 2-2h58a2 2 0 0 1 2 2v6z" fill="#4b2530"/>
<text class="nh" x="778" y="494.500">材质输出</text>
<rect x="773" y="498" width="54" height="7" rx="1.500" fill="#262626"/><text class="n" x="776" y="503.500">全部</text>
<text class="n" x="773" y="513.500">表(曲)面</text><text class="n" x="773" y="523">体积</text><text class="n" x="773" y="533">置换</text>
<circle cx="767" cy="511.700" r="1.800" fill="#72d06a"/><circle cx="767" cy="521" r="1.800" fill="#72d06a"/><circle cx="767" cy="531" r="1.800" fill="#7a6ed0"/>

<!-- node 渐变纹理 -->
<rect x="87" y="642" width="63" height="55" rx="2" fill="#2f2f2f" stroke="#b05a25" stroke-width="1"/>
<path d="M87 650v-6a2 2 0 0 1 2-2h59a2 2 0 0 1 2 2v6z" fill="#a0562a"/>
<text class="nh" x="99" y="648.500">渐变纹理</text>
<text class="n r" x="144" y="659">颜色</text><text class="n r" x="144" y="669">系数</text>
<rect x="92" y="676" width="53" height="7" rx="1.500" fill="#262626"/><text class="n" x="95" y="681.500">线性</text>
<text class="n" x="93" y="691">矢量</text>
<circle cx="149" cy="657" r="1.800" fill="#e6d23a"/><circle cx="149" cy="667" r="1.800" fill="#c8c8c8"/><circle cx="87" cy="689" r="1.800" fill="#6a5ed0"/>

<!-- node 分离 XYZ -->
<rect x="156" y="642" width="62" height="53" rx="2" fill="#2f2f2f" stroke="#b05a25" stroke-width=".8"/>
<path d="M156 650v-6a2 2 0 0 1 2-2h58a2 2 0 0 1 2 2v6z" fill="#1f6d94"/>
<text class="nh" x="168" y="648.500">分离 XYZ</text>
<text class="n r" x="213" y="659">X</text><text class="n r" x="213" y="669">Y</text><text class="n r" x="213" y="679">Z</text>
<text class="n" x="162" y="690">矢量</text>
<circle cx="218" cy="657" r="1.800" fill="#c8c8c8"/><circle cx="218" cy="667" r="1.800" fill="#c8c8c8"/><circle cx="218" cy="677" r="1.800" fill="#c8c8c8"/><circle cx="156" cy="688" r="1.800" fill="#6a5ed0"/>

<!-- node Invert -->
<rect x="254" y="658" width="62" height="43" rx="2" fill="#2f2f2f" stroke="#b05a25" stroke-width=".8"/>
<path d="M254 667v-7a2 2 0 0 1 2-2h58a2 2 0 0 1 2 2v7z" fill="#7e7a22"/>
<text class="nh" x="265.500" y="664.500">Invert Color</text>
<text class="n r" x="311" y="675">颜色</text>
<rect x="259" y="681" width="52" height="7.500" rx="1.500" fill="#4772b3"/><text class="n" x="266" y="686.500" style="fill:#e6e6e6">系数</text><text class="n r" x="305" y="686.500" style="fill:#e6e6e6">1.000</text>
<text class="n" x="259" y="696">颜色</text>
<circle cx="316" cy="673" r="1.800" fill="#e6d23a"/><circle cx="254" cy="685" r="1.800" fill="#c8c8c8"/><circle cx="254" cy="694" r="1.800" fill="#e6d23a"/>

<!-- node 颜色渐变 -->
<rect x="324" y="557" width="107" height="92" rx="2" fill="#2f2f2f" stroke="#b05a25" stroke-width=".8"/>
<path d="M324 566v-7a2 2 0 0 1 2-2h103a2 2 0 0 1 2 2v7z" fill="#1f6d94"/>
<text class="nh" x="336" y="563.500">颜色渐变</text>
<text class="n r" x="426" y="574.500">颜色</text><text class="n r" x="426" y="584">Alpha</text>
<text class="n" x="332" y="599" style="font-size:7px">+</text><text class="n" x="343" y="599" style="font-size:7px">−</text><path d="M353 596l2 2 2-2" class="ic" stroke-width=".7"/>
<rect x="371" y="594" width="24" height="7" rx="1.500" fill="#262626"/><text class="n" x="374" y="599.500">RGB</text>
<rect x="397" y="594" width="27" height="7" rx="1.500" fill="#262626"/><text class="n" x="400" y="599.500">线性</text>
<rect x="331" y="605" width="93" height="7.500" fill="url(#ramp)"/>
<path d="M331 610h4v4h-4zM354 610h4v4h-4z" fill="#5f8fdc" stroke="#333" stroke-width=".4"/><path d="M378 608l2.500 3v3h-5v-3z" fill="#fff" stroke="#222" stroke-width=".6"/>
<rect x="329" y="618" width="27" height="7" rx="1.500" fill="#555"/><text class="n" x="341" y="623.500">1</text>
<rect x="361" y="618" width="64" height="7" rx="1.500" fill="#555"/><text class="n" x="367" y="623.500">位置</text><text class="n r" x="420" y="623.500">0.255</text>
<rect x="329" y="629" width="96" height="7.500" rx="1" fill="#8ccbff"/>
<text class="n" x="329" y="644">系数</text>
<circle cx="431" cy="572" r="1.800" fill="#e6d23a"/><circle cx="431" cy="582" r="1.800" fill="#c8c8c8"/><circle cx="324" cy="642" r="1.800" fill="#c8c8c8"/>

<!-- node 玻璃 BSDF -->
<rect x="510" y="581" width="66" height="74" rx="2" fill="#2f2f2f"/>
<path d="M510 589v-6a2 2 0 0 1 2-2h62a2 2 0 0 1 2 2v6z" fill="#2a6b2e"/>
<text class="nh" x="521" y="587.500">玻璃 BSDF</text>
<text class="n r" x="570" y="598">BSDF</text>
<rect x="515" y="605" width="56" height="7" rx="1.500" fill="#262626"/><text class="n" x="518" y="610.500">贝克曼</text>
<text class="n" x="515" y="620.500">颜色</text>
<rect x="515" y="624" width="56" height="8" rx="1.500" fill="#555"/><text class="n" x="521" y="630">糙度</text><text class="n r" x="565" y="630">0.000</text>
<rect x="515" y="634" width="56" height="8" rx="1.500" fill="#555"/><text class="n" x="519" y="640">IOR 折射率</text><text class="n r" x="565" y="640">1.500</text>
<text class="n" x="515" y="649.500">法向</text>
<circle cx="576" cy="596" r="1.800" fill="#72d06a"/><circle cx="509" cy="618" r="1.800" fill="#e6d23a"/><circle cx="509" cy="628" r="1.800" fill="#c8c8c8"/><circle cx="509" cy="638" r="1.800" fill="#c8c8c8"/><circle cx="509" cy="647" r="1.800" fill="#6a5ed0"/>

<!-- node 透明 BSDF -->
<rect x="577" y="660" width="61" height="33" rx="2" fill="#2f2f2f"/>
<path d="M577 668v-6a2 2 0 0 1 2-2h57a2 2 0 0 1 2 2v6z" fill="#2a6b2e"/>
<text class="nh" x="588" y="666.500">透明 BSDF</text>
<text class="n r" x="633" y="677">BSDF</text><text class="n" x="582" y="688.500">颜色</text>
<circle cx="638" cy="675" r="1.800" fill="#72d06a"/><circle cx="576" cy="686" r="1.800" fill="#e6d23a"/>

<!-- node 混合着色器 -->
<rect x="698" y="559" width="62" height="52" rx="2" fill="#2f2f2f"/>
<path d="M698 567v-6a2 2 0 0 1 2-2h58a2 2 0 0 1 2 2v6z" fill="#2a6b2e"/>
<text class="nh" x="709" y="565.500">混合着色器</text>
<text class="n r" x="755" y="576">着色器</text>
<text class="n" x="703" y="587">系数</text><text class="n" x="703" y="597">着色器</text><text class="n" x="703" y="607">着色器</text>
<circle cx="760" cy="574" r="1.800" fill="#72d06a"/><circle cx="698" cy="585" r="1.800" fill="#c8c8c8"/><circle cx="698" cy="595" r="1.800" fill="#72d06a"/><circle cx="698" cy="605" r="1.800" fill="#72d06a"/>

<rect x="0" y="713" width="935" height="4" fill="#2e2e2e"/>
<text x="1112" y="703" style="fill:#666;font-size:17.500px" textLength="160">@稀土掘金技术社区</text>
</svg>
</body></html>
